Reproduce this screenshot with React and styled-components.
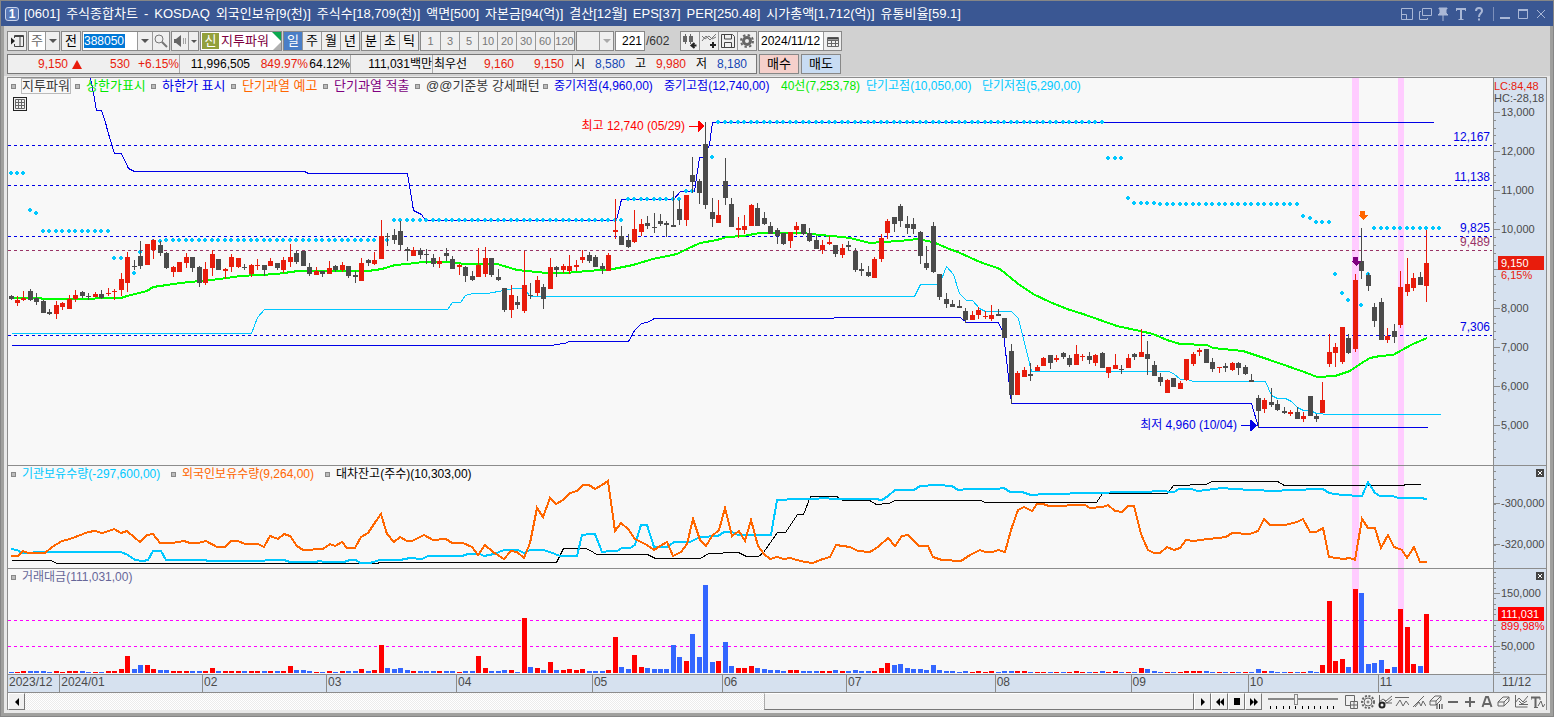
import React from 'react';
import styled, { createGlobalStyle } from 'styled-components';

const GlobalStyle = createGlobalStyle`
  * {
    box-sizing: border-box;
  }

  body {
    margin: 0;
    color: #000;
    font-family: 'Liberation Sans', 'Noto Sans CJK KR', sans-serif;
    font-size: 12px;
    line-height: 14px;
  }

  button,
  input,
  select {
    margin: 0;
    padding: 0;
    border: 0;
    border-radius: 0;
    background: none;
    color: inherit;
    font: inherit;
    appearance: none;
    outline: none;
  }

  svg {
    display: block;
    flex: none;
  }
`;

/* ---------- data ---------- */

// [up, bodyTop, bodyBottom, high, low]
const candles = [
  [0,296,299,295,300],[1,300,303,296,306],[1,298,300,291,301],[0,291,300,289,301],[0,298,302,293,305],
  [0,301,313,300,313],[0,312,314,309,315],[1,305,314,301,319],[1,303,307,302,310],[1,299,309,295,309],
  [1,295,299,290,302],[0,292,296,291,298],[0,296,297,293,300],[1,294,297,292,297],[0,294,298,290,299],
  [1,293,294,288,296],[1,291,292,289,300],[1,279,290,273,296],[1,257,283,252,292],[0,266,267,260,270],
  [0,256,266,241,269],[1,244,265,244,265],[1,240,250,239,259],[0,245,253,241,256],[0,253,268,252,269],
  [1,267,272,266,277],[1,262,272,262,272],[1,257,263,253,268],[0,257,268,257,272],[0,267,283,266,287],
  [1,269,283,262,285],[1,254,268,250,276],[0,259,270,259,270],[1,269,271,268,279],[1,257,267,254,272],
  [1,258,267,258,268],[0,267,268,264,270],[1,265,274,264,277],[1,265,266,259,270],[0,265,270,265,276],
  [1,261,266,258,266],[0,263,268,263,270],[1,260,270,257,273],[1,257,262,244,267],[0,253,262,251,264],
  [0,251,266,251,266],[0,267,274,263,276],[1,271,275,267,275],[0,271,274,271,277],[1,268,274,261,274],
  [0,266,270,265,272],[1,265,270,262,272],[0,266,276,266,278],[0,275,277,271,283],[1,263,281,258,281],
  [0,260,263,259,266],[1,260,264,252,265],[1,236,259,220,259],[0,236,237,233,246],[0,235,240,229,244],
  [0,231,245,221,250],[0,249,251,247,261],[1,250,256,247,256],[0,250,255,248,259],[0,254,255,249,264],
  [0,258,264,254,267],[1,261,264,257,268],[0,253,256,248,261],[0,259,269,256,269],[1,265,267,264,275],
  [0,267,276,266,282],[0,276,280,271,281],[1,265,277,248,277],[1,258,274,247,277],[0,258,275,258,277],
  [0,277,280,269,281],[0,288,310,288,312],[1,295,310,285,318],[0,302,305,296,309],[1,285,311,251,313],
  [0,295,296,283,299],[1,280,293,276,296],[0,287,299,284,309],[1,267,289,258,289],[0,267,270,266,277],
  [1,266,270,264,273],[1,266,271,255,274],[1,265,267,260,271],[1,257,260,250,263],[0,255,261,252,263],
  [0,257,267,255,267],[0,266,269,263,274],[1,255,271,253,271],[1,230,232,199,239],[0,236,245,226,245],
  [0,240,247,234,248],[1,229,242,210,243],[1,224,232,219,236],[0,223,226,216,229],[0,227,228,213,233],
  [0,221,224,214,226],[0,223,225,221,237],[0,225,227,191,227],[0,209,220,200,225],[1,195,220,195,226],
  [0,175,182,157,193],[0,181,193,179,204],[0,144,205,122,209],[0,212,219,198,227],[1,215,223,200,223],
  [0,181,198,158,205],[0,204,227,198,227],[1,228,230,217,238],[1,226,230,215,234],[1,205,226,204,226],
  [0,208,226,203,226],[0,218,224,212,225],[0,226,234,222,234],[0,230,236,228,244],[0,233,244,233,245],
  [1,232,241,232,248],[1,226,230,222,235],[0,224,234,224,235],[0,233,241,228,242],[0,240,249,236,249],
  [1,245,250,240,254],[1,242,244,236,245],[0,245,254,245,257],[1,248,255,244,258],[0,245,247,241,251],
  [0,251,270,248,272],[0,269,271,263,276],[0,272,276,266,277],[1,259,278,257,278],[1,238,259,234,262],
  [1,221,233,219,239],[0,217,224,217,232],[0,206,221,204,227],[0,224,228,216,234],[0,224,229,218,234],
  [0,232,256,231,264],[0,263,268,246,270],[0,226,272,222,273],[0,274,297,274,300],[0,299,304,293,308],
  [0,304,307,300,307],[0,306,308,300,308],[0,311,320,308,323],[1,315,320,311,320],[1,310,315,307,319],
  [1,316,317,311,319],[1,315,319,305,321],[0,314,316,309,316],[0,318,338,318,338],[0,351,395,344,404],
  [1,373,395,371,395],[1,370,377,367,377],[0,374,376,363,381],[1,367,371,365,371],[1,358,366,357,366],
  [0,355,363,355,369],[1,358,360,355,362],[0,353,357,352,359],[0,358,365,355,367],[1,354,365,345,365],
  [1,356,357,354,361],[0,356,360,352,364],[1,355,363,354,366],[0,353,368,352,368],[1,367,373,367,378],
  [1,365,369,354,369],[0,369,370,365,374],[1,358,368,354,368],[0,354,357,353,360],[1,352,357,329,357],
  [0,354,359,341,375],[0,365,376,361,376],[0,377,382,373,386],[1,380,393,379,393],[0,378,387,378,387],
  [1,383,389,381,389],[1,359,380,359,381],[1,354,364,352,366],[1,350,352,348,356],[0,349,363,349,363],
  [0,362,369,358,372],[1,367,368,367,373],[0,366,368,363,372],[1,363,370,362,371],[0,363,368,362,375],
  [0,367,374,365,375],[0,380,382,374,382],[0,398,411,395,428],[1,400,409,398,413],[0,402,405,388,407],
  [0,404,410,400,411],[0,411,413,407,414],[1,412,414,410,416],[0,412,419,407,419],[1,416,419,412,422],
  [0,396,416,396,416],[0,416,419,414,422],[1,400,413,382,413],[1,352,364,334,367],[1,347,353,343,367],
  [1,327,362,327,364],[0,338,353,334,354],[1,280,349,274,352],[0,261,271,228,279],[0,275,286,273,291],
  [0,307,321,303,327],[0,302,340,298,340],[1,336,340,328,343],[0,331,337,324,343],[1,287,325,271,328],
  [1,284,292,258,296],[1,278,288,273,291],[0,277,285,272,285],[1,263,286,230,302],
];

// bar heights, negative on a falling day
const volumes = [
  -1,1,2,-2,-2,-2,-1,2,1,2,2,-2,-1,1,-1,2,2,4,17,-4,-8,8,4,-3,-3,2,2,2,-2,-2,
  2,5,-2,2,2,2,-2,2,2,-2,2,-2,2,7,-3,-3,-2,1,-1,2,-1,2,-2,-2,4,-2,3,28,-5,-4,
  -5,-3,2,-2,-2,-2,2,-2,-2,1,-2,-2,17,5,-2,-2,-3,3,-1,55,-6,5,-3,11,-3,3,4,3,4,-2,
  -2,-2,3,36,-6,-4,18,6,-5,-4,-4,-4,-28,-16,12,-39,-16,-88,-11,12,-31,-7,5,5,7,-5,-4,-3,-3,-2,
  3,3,-2,-2,-2,2,2,-3,2,-2,-3,-2,-2,2,5,10,-8,-9,-5,-4,-4,-3,-8,-3,-2,-2,-1,-2,1,2,
  1,2,-1,-2,-2,2,2,-1,1,1,-1,1,-1,1,2,1,-1,1,-2,1,2,-1,1,-1,5,-4,-2,-1,1,-1,
  1,2,2,2,-2,-1,1,-1,1,-1,1,-1,-4,2,-2,-1,-1,1,-1,1,-2,-1,8,72,12,14,-6,84,-80,-9,
  -10,-13,4,-6,64,46,9,-7,59,
];

// [firstDay, lastDay, y]
const dotRuns = [
  [0,2,173],[3,3,210],[4,4,213],[5,15,231],[16,17,258],[19,19,273],[20,20,252],[22,22,241],
  [23,23,241],[24,58,240],[59,94,220],[95,103,199],[104,105,191],[108,108,157],[109,168,122],
  [169,171,158],[172,172,198],[173,176,203],[177,198,204],[199,199,216],[200,200,218],
  [201,203,222],[204,204,274],[205,205,293],[206,206,300],[208,208,305],[209,209,274],[210,220,228],
];

const MID_HIGH = '90,78 93,93 96,110 101,110 105,122 107,130 114,153 121,153 128,168 134,171 304,171 308,173 407,173 413,210 421,214 425,220 616,220 621,199 673,199 680,191 694,191 699,157 704,157 709,144 712,122 1433,122';
const MID_LOW = '11,345 552,345 555,344 565,343 568,341 628,341 634,330 641,323 647,322 654,318 833,318 834,317 960,317 966,322 998,322 1003,333 1011,403 1251,403 1258,427 1427,427';
const SHORT_LOW = '11,333 251,333 257,317 264,309 447,309 452,302 460,302 465,295 472,293 487,293 503,290 515,288 523,288 530,296 914,296 920,284 939,284 946,266 953,274 959,293 966,300 972,300 979,308 985,311 1011,311 1018,318 1031,371 1168,371 1173,373 1180,379 1187,379 1193,381 1265,381 1271,395 1277,398 1285,398 1291,401 1297,407 1303,410 1310,410 1316,413 1328,414 1440,414';
const MA40 = '11,298 38,298 45,299 90,299 100,298 121,298 127,296 135,294 147,291 153,287 167,285 180,283 200,281 220,279 240,276 277,274 298,271 368,271 382,269 395,265 407,264 423,262 450,262 465,264 497,264 517,270 547,273 565,273 600,270 613,269 633,265 653,259 677,254 687,249 700,243 717,240 727,237 743,236 760,233 803,233 820,235 832,236 850,238 870,243 883,242 900,241 917,239 933,242 947,248 960,253 980,262 1000,269 1017,283 1033,294 1050,302 1067,309 1083,314 1100,320 1117,326 1140,331 1153,334 1167,340 1180,344 1207,345 1213,348 1243,351 1267,359 1290,367 1307,373 1317,377 1335,376 1350,371 1360,364 1370,358 1380,356 1393,355 1402,350 1413,344 1427,338';
const INSTITUTION = '11,549 17,550 22,553 45,552 121,552 128,555 135,560 143,561 148,560 153,551 161,551 166,560 205,560 208,561 264,561 266,560 284,560 290,562 315,562 320,561 324,562 344,562 350,560 356,560 360,563 370,563 380,560 400,560 410,558 422,559 428,556 462,556 468,554 480,554 484,556 494,554 504,550 518,550 524,553 530,550 543,550 550,552 560,556 577,556 582,535 590,534 595,534 602,552 610,551 617,551 622,548 630,548 635,545 641,525 647,525 654,547 667,547 674,542 690,542 700,537 718,536 724,532 732,532 738,535 771,535 777,500 797,499 815,499 823,498 835,499 875,499 882,500 888,496 895,490 914,490 920,486 937,485 952,486 958,490 968,489 996,489 1004,488 1010,492 1022,492 1031,495 1045,494 1065,494 1075,493 1145,492 1160,491 1174,492 1179,489 1192,489 1197,491 1207,490 1213,489 1223,488 1232,489 1275,491 1290,490 1323,489 1329,493 1342,495 1362,496 1368,482 1375,493 1380,496 1393,496 1398,498 1420,498 1427,499';
const FOREIGN = '11,556 18,556 23,551 28,553 45,553 52,547 62,541 70,539 78,536 88,532 95,531 102,533 109,531 114,529 121,533 127,531 135,538 140,542 147,535 153,534 160,543 172,543 184,541 190,543 198,543 206,541 217,547 225,547 231,541 238,541 245,544 258,544 264,547 270,536 278,539 284,534 290,536 297,546 303,550 323,549 330,544 335,546 342,542 347,548 355,548 361,537 368,533 376,521 381,514 387,534 394,542 400,537 407,541 412,541 424,535 433,540 446,539 452,543 463,543 472,547 478,555 485,545 493,552 504,559 511,551 517,552 524,558 530,543 537,508 543,517 550,498 556,504 563,500 570,493 577,491 583,485 589,485 595,489 602,485 608,481 615,531 621,523 628,529 635,539 647,545 654,550 660,546 667,542 673,556 681,552 687,544 693,519 700,540 706,546 712,536 719,530 725,508 732,536 739,531 745,541 751,520 758,546 764,554 770,559 777,557 784,559 790,558 797,560 805,562 813,563 820,560 830,557 836,545 850,547 858,551 870,552 878,547 888,538 895,546 902,536 908,535 919,546 928,546 933,557 942,560 961,561 970,555 980,550 985,552 993,552 998,550 1005,552 1011,530 1018,510 1024,507 1032,511 1037,504 1043,504 1049,506 1085,505 1090,508 1103,507 1108,505 1115,511 1122,512 1128,506 1134,506 1141,534 1148,550 1154,553 1160,553 1167,547 1174,550 1180,548 1186,540 1194,541 1200,540 1226,537 1232,533 1250,534 1258,531 1264,519 1270,525 1285,525 1297,522 1303,519 1310,532 1316,532 1323,528 1329,557 1343,559 1350,558 1355,560 1362,519 1368,528 1375,528 1381,548 1388,535 1394,547 1402,550 1407,558 1414,547 1420,562 1427,562';
const LENDING = '11,560 51,560 56,563 378,563 378,562 556,562 563,548 585,548 590,550 596,554 647,554 655,558 700,558 708,553 738,552 746,556 758,556 763,552 777,532 785,532 797,514 803,514 810,496 836,496 843,500 869,500 876,504 888,503 895,500 980,500 985,502 1096,502 1102,493 1167,493 1173,485 1206,484 1211,481 1277,481 1284,485 1404,485 1404,484 1420,484';

const titleParts = [
  '[0601]', '주식종합차트', '-', 'KOSDAQ', '외국인보유[9(천)]', '주식수[18,709(천)]', '액면[500]',
  '자본금[94(억)]', '결산[12월]', 'EPS[37]', 'PER[250.48]', '시가총액[1,712(억)]', '유통비율[59.1]',
];

const priceLegend = [
  { text: '지투파워', color: '#3a3a3a', w: 64, mark: true, boxed: true },
  { text: '상한가표시', color: '#00e800', w: 76, mark: true },
  { text: '하한가 표시', color: '#0000e6', w: 80, mark: true },
  { text: '단기과열 예고', color: '#ff6600', w: 92, mark: true },
  { text: '단기과열 적출', color: '#800080', w: 92, mark: true },
  { text: '@@기준봉 강세패턴', color: '#3a3a3a', w: 128, mark: true },
  { text: '중기저점(4,960,00)', color: '#0000e6', w: 121, mark: true },
  { text: '중기고점(12,740,00)', color: '#0000e6', w: 117 },
  { text: '40선(7,253,78)', color: '#00e800', w: 85 },
  { text: '단기고점(10,050,00)', color: '#00c8ff', w: 116 },
  { text: '단기저점(5,290,00)', color: '#00c8ff', w: 110 },
];

const holdingLegend = [
  { text: '기관보유수량(-297,600,00)', color: '#00c8ff', w: 160, mark: true },
  { text: '외국인보유수량(9,264,00)', color: '#ff6600', w: 154, mark: true },
  { text: '대차잔고(주수)(10,303,00)', color: '#000', w: 160, mark: true },
];

const valueLegend = [
  { text: '거래대금(111,031,00)', color: '#666699', w: 140, mark: true },
];

const months = [
  ['2023/12', 51], ['2024/01', 143], ['02', 124], ['03', 130], ['04', 136], ['05', 130],
  ['06', 124], ['07', 149], ['08', 136], ['09', 117], ['10', 130], ['11', 115],
];

/* ---------- frame ---------- */

const Frame = styled.div`
  display: flex;
  flex-direction: column;
  min-height: 100vh;
  border: 1px solid #868686;
  background: #a0a09e;
`;

const TitleBar = styled.header`
  display: flex;
  align-items: center;
  height: 25px;
  padding: 0 5px 0 4px;
  background: #3a5793;
  color: #fff;
`;

const WindowNo = styled.span`
  width: 14px;
  height: 14px;
  margin-right: 5px;
  border: 1px solid #c9d3ea;
  border-radius: 3px;
  background: #5878b8;
  font-weight: bold;
  line-height: 12px;
  text-align: center;
`;

const Title = styled.h1`
  display: flex;
  flex: 1;
  gap: 6px;
  margin: 0;
  font-size: 13px;
  font-weight: normal;
  white-space: nowrap;
`;

const WindowButtons = styled.div`
  display: flex;
  align-items: center;
  gap: 4px;
  color: #a9b7d6;

  i {
    width: 1px;
    height: 14px;
    margin-left: 3px;
    background: #7d90bb;
  }

  button {
    display: grid;
    place-items: center;
    width: 14px;
    height: 16px;
  }
`;

const Body = styled.main`
  display: flex;
  flex: 1;
  flex-direction: column;
  margin: 0 3px 3px;
  background: #d1d1d1;
`;

/* ---------- toolbar ---------- */

const ToolRow = styled.div`
  display: flex;
  align-items: center;
  height: 20px;
  margin: 5px 3px 0;
  gap: 1px;
  white-space: nowrap;

  & + & {
    margin-top: 3px;
  }
`;

const Group = styled.div`
  display: flex;
  height: 20px;
  border: 1px solid #888;
  background: #efefef;
  overflow: hidden;

  & > * + * {
    border-left: 1px solid #999;
  }
`;

const ToolButton = styled.button`
  display: grid;
  place-items: center;
  width: ${({ $w }) => $w || 19}px;
  height: 18px;
  background: ${({ $on }) => ($on ? '#4a7ec6' : 'transparent')};
  color: ${({ $on }) => ($on ? '#fff' : '#000')};
  font-size: 13px;
`;

const MinuteButton = styled(ToolButton)`
  color: #777;
  font-size: 11px;
`;

const Field = styled.input`
  width: ${({ $w }) => $w}px;
  height: 18px;
  padding: 0 2px;
  background: #fff;
  text-align: ${({ $align }) => $align || 'left'};
`;

const CodeBox = styled.div`
  display: flex;
  align-items: center;
  width: 54px;
  padding-left: 1px;
  background: #fff;
`;

const CodeField = styled.input`
  width: 41px;
  height: 14px;
  background: #0078d7;
  color: #fff;
`;

const Picker = styled.select`
  width: ${({ $w }) => $w}px;
  height: 18px;
  padding-left: 2px;
  background: ${({ $bg }) => $bg || '#fff'};
  color: #666;
  font-size: 13px;
`;

const StockName = styled.div`
  position: relative;
  display: flex;
  align-items: center;
  width: 80px;
  background: #fff;
  color: #7d0040;
  font-size: 13px;

  b {
    width: 17px;
    height: 16px;
    margin: 0 2px 0 1px;
    background: #93a03b;
    color: #fff;
    font-weight: normal;
    line-height: 16px;
    text-align: center;
  }

  svg {
    position: absolute;
    top: 0;
    right: 0;
  }
`;

const Total = styled.span`
  width: 33px;
  color: #333;
`;

const Quote = styled.div`
  display: flex;
  align-items: center;
  height: 20px;
  border: 1px solid #777;
  background: #efefef;
`;

const Figure = styled.span`
  display: flex;
  align-items: center;
  justify-content: ${({ $left }) => ($left ? 'flex-start' : 'flex-end')};
  width: ${({ $w }) => $w}px;
  height: 18px;
  padding-left: ${({ $left }) => ($left ? 1 : 0)}px;
  border-left: ${({ $line }) => ($line ? '1px solid #aaa' : '0')};
  color: ${({ $color }) => $color || '#000'};
`;

const OrderButton = styled.button`
  width: 40px;
  height: 20px;
  margin-left: 1px;
  border: 1px solid #888;
  background: ${({ $bg }) => $bg};
  font-size: 13px;
`;

/* ---------- charts ---------- */

const ChartArea = styled.section`
  display: grid;
  flex: 1;
  grid-template-rows: minmax(0, 388fr) minmax(0, 103fr) minmax(0, 106fr) 18px 17px;
  margin: 3px;
  border: solid #8c8c8c;
  border-width: 1px 1px 0;
  box-shadow: 0 0 0 3px #e8e8e8;
  clip-path: inset(-1px -3px -3px);
`;

const Pane = styled.div`
  display: grid;
  grid-template-columns: minmax(0, 1fr) 53px;
  min-height: 0;
  border-bottom: 1px solid #8c8c8c;
  overflow: hidden;
`;

const Plot = styled.div`
  position: relative;
  background: #f8f8f8;

  & > svg {
    position: absolute;
    inset: 0;
    width: 100%;
    height: 100%;
  }
`;

const Axis = styled.div`
  position: relative;
  border-left: 1px solid #8c8c8c;
  background: #d6e1ef;
  font-size: 11px;
  overflow: hidden;

  & > svg {
    width: 8px;
    height: 100%;
  }
`;

const AxisLabel = styled.span`
  position: absolute;
  left: ${({ $edge }) => ($edge ? 0 : 7)}px;
  color: ${({ $color }) => $color || '#4a4a4a'};
  white-space: nowrap;
  transform: translateY(-50%);
`;

const AxisTag = styled(AxisLabel)`
  left: 4px;
  width: 46px;
  height: 14px;
  padding-left: 3px;
  background: ${({ $bg }) => $bg};
  color: #fff;
`;

const LevelLabel = styled.span`
  position: absolute;
  right: 3px;
  color: ${({ $color }) => $color};
  transform: translateY(-50%);
`;

const Note = styled.span`
  position: absolute;
  color: ${({ $color }) => $color};
  white-space: nowrap;
  transform: translate(-100%, -50%);
`;

const ClosePane = styled.button`
  position: absolute;
  top: 3px;
  right: 2px;
  display: grid;
  place-items: center;
  width: 8px;
  height: 8px;
  background: #444;
`;

const LegendRow = styled.ul`
  position: relative;
  display: flex;
  margin: 0;
  padding: 1px 3px;
  list-style: none;
`;

const LegendItem = styled.li`
  display: flex;
  flex: none;
  align-items: center;
  gap: 6px;
  width: ${({ $w }) => $w}px;
  color: ${({ $color }) => $color};
  white-space: nowrap;

  i {
    width: 5px;
    height: 5px;
    border: 1px solid #888;
    background: #bbb;
  }
`;

const LegendText = styled.span`
  font-size: ${({ $wide }) => ($wide ? 13 : 12)}px;
  outline: ${({ $boxed }) => ($boxed ? '1px solid #bbb' : 'none')};
`;

const GridButton = styled.button`
  position: relative;
  display: grid;
  place-items: center;
  width: 14px;
  height: 14px;
  margin: 3px 5px;
  border: 1px solid #222;
  background: #f0f0f0;
`;

const TimeRow = styled.div`
  display: grid;
  grid-template-columns: minmax(0, 1fr) 53px;
  border-bottom: 1px solid #8c8c8c;
  background: #d6e1ef;
  color: #4a4a4a;
`;

const Months = styled.div`
  display: flex;
`;

const Month = styled.span`
  flex: ${({ $days }) => $days} 0 0;
  min-width: 0;
  padding-left: 1px;

  & + & {
    border-left: 1px solid #8c8c8c;
  }
`;

const LastDay = styled.span`
  padding-left: 8px;
  border-left: 1px solid #8c8c8c;
`;

/* ---------- bottom bar ---------- */

const BottomBar = styled.div`
  display: flex;
  background: #f0f0f0;
`;

const BarButton = styled.button`
  display: grid;
  place-items: center;
  width: 17px;
  height: 17px;
  border: 1px solid;
  border-color: #fff #777 #777 #fff;
  background: #f0f0f0;
`;

const Track = styled.div`
  display: grid;
  flex: 1;
  grid-template-columns: 740fr 430fr;
  background: repeating-conic-gradient(#fff 0 25%, #ececec 0 50%) 0 0 / 2px 2px;
`;

const Thumb = styled.div`
  grid-column: 2;
  border: 1px solid;
  border-color: #fff #777 #777 #aaa;
  background: #f0f0f0;
`;

const Zoom = styled.label`
  display: flex;
  flex-direction: column;
  width: 70px;
  margin: 0 5px 0 6px;

  input {
    width: 100%;
    height: 12px;
    background: linear-gradient(#888, #888) 0 5px / 100% 2px no-repeat;
  }

  input::-webkit-slider-thumb {
    width: 4px;
    height: 11px;
    border: 1px solid #888;
    background: #f0f0f0;
    appearance: none;
  }
`;

const DrawTools = styled.div`
  display: flex;
  align-items: center;
  gap: 1px;
  color: #666;

  button {
    display: grid;
    place-items: center;
    width: 16px;
    height: 17px;
  }
`;

/* ---------- pieces ---------- */

const BLUE = '#0000e6';
const RED = '#e81c0c';

const dayX = (i) => Math.floor(11 + i * 6.495);

const range = (from, to, step) => {
  const out = [];
  for (let v = from; v < to; v += step) out.push(Math.round(v));
  return out;
};

function Icon({ w = 14, h = 14, sw = 1, children }) {
  return (
    <svg width={w} height={h} viewBox={`0 0 ${w} ${h}`} fill="none" stroke="currentColor" strokeWidth={sw}>
      {children}
    </svg>
  );
}

const Down = ({ color = '#555' }) => (
  <svg width="8" height="4">
    <path d="M0 0h8L4 4z" fill={color} />
  </svg>
);

function Legend({ items }) {
  return (
    <LegendRow>
      {items.map(({ text, color, w, mark, boxed }) => (
        <LegendItem key={text} $w={w} $color={color}>
          {mark && <i />}
          <LegendText $wide={!/\d/.test(text)} $boxed={boxed}>{text}</LegendText>
        </LegendItem>
      ))}
    </LegendRow>
  );
}

function ChartSvg({ top, height, children }) {
  return (
    <svg viewBox={`8 ${top} 1485 ${height}`} preserveAspectRatio="none" shapeRendering="crispEdges">
      <rect x="1352" y={top} width="7" height={height} fill="#ffccff" />
      <rect x="1398" y={top} width="6" height={height} fill="#ffccff" />
      {children}
    </svg>
  );
}

function Line({ points, color, width = 1 }) {
  return (
    <polyline
      points={points}
      fill="none"
      stroke={color}
      strokeWidth={width}
      transform={width === 1 ? 'translate(.5 .5)' : undefined}
    />
  );
}

function Dashed({ y, color }) {
  return <line x1="8" x2="1492" y1={y + 0.5} y2={y + 0.5} stroke={color} strokeDasharray="3 3" />;
}

function Ticks({ top, height, majors, minors }) {
  return (
    <svg viewBox={`0 ${top} 8 ${height}`} preserveAspectRatio="none" shapeRendering="crispEdges" fill="#8c8c8c">
      {minors.map((y) => <rect key={y} y={y} width="2" height="1" />)}
      {majors.map((y) => <rect key={y} y={y} width="6" height="1" />)}
    </svg>
  );
}

function PricePane() {
  const top = 78;
  const height = 387;
  const at = (y) => ({ top: `${((y - top) / height) * 100}%` });
  const noteAt = (x, y) => ({ ...at(y), left: `${((x - 8) / 1485) * 100}%` });
  return (
    <Pane>
      <Plot>
        <ChartSvg top={top} height={height}>
          {[145, 185, 236, 335].map((y) => <Dashed key={y} y={y} color={BLUE} />)}
          <Dashed y={250} color="#993366" />
          <Line points={MID_HIGH} color={BLUE} />
          <Line points={MID_LOW} color={BLUE} />
          <Line points={SHORT_LOW} color="#00c8ff" />
          <Line points={MA40} color="#00ff00" width={2} />
          {dotRuns.map(([from, to, y]) =>
            Array.from({ length: to - from + 1 }, (_, k) => {
              const x = dayX(from + k);
              return <path key={`${x}-${y}`} d={`M${x - 1} ${y - 2}h2v1h1v2h-1v1h-2v-1h-1v-2h1z`} fill="#00c8ff" />;
            })
          )}
          {candles.map(([up, bodyTop, bodyBottom, high, low], i) => (
            <g key={i} fill={up ? RED : '#4b4b4b'}>
              <rect x={dayX(i)} y={high} width="1" height={low - high} />
              <rect x={dayX(i) - 2} y={bodyTop} width="5" height={bodyBottom - bodyTop} />
            </g>
          ))}
          <path d="M1360 211h5v4h3l-5 5-5-5h2z" fill="#ff6600" />
          <path d="M1353 257h5v4h3l-5 5-5-5h2z" fill="#800080" />
          <path d="M689 126h9v-5h1l5 5-5 6h-1v-5h-9z" fill="#f00" />
          <path d="M1241 425h9v-5h1l6 5-6 6h-1v-5h-9z" fill={BLUE} />
        </ChartSvg>
        <Legend items={priceLegend} />
        <GridButton aria-label="표">
          <Icon w={10} h={10}><path d="M.5.5h9v9h-9zM3.5 0v10M6.5 0v10M0 3.5h10M0 6.5h10" stroke="#666" /></Icon>
        </GridButton>
        <Note $color="#f00" style={noteAt(685, 126)}>최고 12,740 (05/29)</Note>
        <Note $color={BLUE} style={noteAt(1237, 425)}>최저 4,960 (10/04)</Note>
        <LevelLabel $color={BLUE} style={at(137)}>12,167</LevelLabel>
        <LevelLabel $color={BLUE} style={at(177)}>11,138</LevelLabel>
        <LevelLabel $color={BLUE} style={at(228)}>9,825</LevelLabel>
        <LevelLabel $color="#993366" style={at(242)}>9,489</LevelLabel>
        <LevelLabel $color={BLUE} style={at(327)}>7,306</LevelLabel>
      </Plot>
      <Axis>
        <Ticks
          top={top}
          height={height}
          majors={[112, 151, 190, 229, 269, 308, 347, 386, 425]}
          minors={range(112, 460, 7.83)}
        />
        <AxisLabel $edge $color={RED} style={at(86)}>LC:84,48</AxisLabel>
        <AxisLabel $edge style={at(98)}>HC:-28,18</AxisLabel>
        {[[13, 112], [12, 151], [11, 190], [10, 229], [8, 308], [7, 347], [6, 386], [5, 425]].map(([k, y]) => (
          <AxisLabel key={k} style={at(y)}>{k},000</AxisLabel>
        ))}
        <AxisTag $bg={RED} style={at(263)}>9,150</AxisTag>
        <AxisLabel $color={RED} style={at(275)}>6,15%</AxisLabel>
      </Axis>
    </Pane>
  );
}

const CloseX = () => (
  <ClosePane aria-label="닫기">
    <Icon w={4} h={4}><path d="M0 0l4 4M4 0L0 4" stroke="#fff" /></Icon>
  </ClosePane>
);

function HoldingPane() {
  const top = 466;
  const height = 102;
  const at = (y) => ({ top: `${((y - top) / height) * 100}%` });
  return (
    <Pane>
      <Plot>
        <ChartSvg top={top} height={height}>
          <Line points={LENDING} color="#000" />
          <Line points={INSTITUTION} color="#00c8ff" width={2} />
          <Line points={FOREIGN} color="#ff6600" width={2} />
        </ChartSvg>
        <Legend items={holdingLegend} />
      </Plot>
      <Axis>
        <Ticks top={top} height={height} majors={[503, 544]} minors={range(471, 566, 8.2)} />
        <AxisLabel style={at(503)}>-300,000</AxisLabel>
        <AxisLabel style={at(544)}>-320,000</AxisLabel>
        <CloseX />
      </Axis>
    </Pane>
  );
}

function ValuePane() {
  const top = 569;
  const height = 105;
  const at = (y) => ({ top: `${((y - top) / height) * 100}%` });
  return (
    <Pane>
      <Plot>
        <ChartSvg top={top} height={height}>
          <Dashed y={620} color="#f0f" />
          <Dashed y={646} color="#f0f" />
          {volumes.map((v, i) => (
            <rect
              key={i}
              x={dayX(i) - 2}
              y={673 - Math.abs(v)}
              width="5"
              height={Math.abs(v)}
              fill={v > 0 ? '#f00' : '#3366ff'}
            />
          ))}
        </ChartSvg>
        <Legend items={valueLegend} />
      </Plot>
      <Axis>
        <Ticks top={top} height={height} majors={[593, 620, 646, 672]} minors={range(572, 672, 5.3)} />
        <AxisLabel style={at(593)}>150,000</AxisLabel>
        <AxisLabel style={at(646)}>50,000</AxisLabel>
        <AxisLabel $color="#f00" style={at(626)}>899,98%</AxisLabel>
        <AxisTag $bg="#f00" style={at(614)}>111,031</AxisTag>
        <CloseX />
      </Axis>
    </Pane>
  );
}

function Toolbar() {
  return (
    <ToolRow>
      <Group>
        <ToolButton $w={18} aria-label="창 고정">
          <Icon><path d="M4.5 4V1.500h9v11h-9V10M4 2.500h9" stroke="#444" /><path d="M10 1.500v11" stroke="#444" /><path d="M1 3.500l4 3.500-4 3.500z" fill="#222" stroke="none" /></Icon>
        </ToolButton>
      </Group>
      <Group>
        <Picker $w={16} aria-label="종목 구분"><option>주</option></Picker>
        <ToolButton $w={14} aria-label="열기"><Down /></ToolButton>
      </Group>
      <Group><ToolButton $w={18}>전</ToolButton></Group>
      <Group>
        <CodeBox><CodeField aria-label="종목코드" defaultValue="388050" /></CodeBox>
        <ToolButton $w={15} aria-label="최근 종목"><Down /></ToolButton>
        <ToolButton $w={17} aria-label="검색">
          <Icon><circle cx="5" cy="5" r="4" stroke="#777" /><path d="M8 8l5 5" stroke="#777" strokeWidth="2" /></Icon>
        </ToolButton>
      </Group>
      <Group>
        <ToolButton $w={16} aria-label="음성">
          <Icon><path d="M1 5h2l5-4v12L3 9H1z" fill="#666" stroke="none" /><path d="M10 5h1M12 5h1M10 7h1M12 7h1M10 9h1M12 9h1" stroke="#555" /></Icon>
        </ToolButton>
        <ToolButton $w={10} aria-label="음성 설정"><svg width="6" height="3"><path d="M0 0h6L3 3z" fill="#555" /></svg></ToolButton>
      </Group>
      <Group>
        <StockName>
          <b>신</b>지투파워
          <svg width="9" height="18"><path d="M0 0h9v9z" fill="#0aa84f" /><path d="M9 10v8H1z" fill="#b0b0b0" /></svg>
        </StockName>
      </Group>
      <Group>
        {['일', '주', '월', '년'].map((t, i) => <ToolButton key={t} $w={i ? 19 : 18} $on={t === '일'}>{t}</ToolButton>)}
      </Group>
      <Group>
        {['분', '초', '틱'].map((t, i) => <ToolButton key={t} $w={i ? 19 : 18}>{t}</ToolButton>)}
      </Group>
      <Group>
        {[1, 3, 5, 10, 20, 30, 60].map((n) => <MinuteButton key={n}>{n}</MinuteButton>)}
        <MinuteButton $w={20}>120</MinuteButton>
      </Group>
      <Group>
        <Picker $w={22} $bg="#efefef" aria-label="주기" />
        <ToolButton $w={14} aria-label="주기 열기"><Down color="#aaa" /></ToolButton>
      </Group>
      <Group><Field $w={28} $align="right" aria-label="표시 개수" defaultValue="221" /></Group>
      <Total>/602</Total>
      <Group>
        <ToolButton $w={18} aria-label="차트 유형 추가">
          <Icon w={16} h={16}><path d="M1 3h4v6H1zM7 3h4v6H7z" fill="#666" stroke="none" /><path d="M3.500 1v10M8.500 1v10" stroke="#666" /><path d="M9.500 12.500h5M12.500 10l-3 2.500 3 2.500" stroke="#222" strokeWidth="2" /></Icon>
        </ToolButton>
        <ToolButton aria-label="지표 추가">
          <Icon w={16} h={16}><path d="M1 8l4-5 4 4 6-6M1 3l3 3 4-3 3 3 4-2" stroke="#777" /><path d="M9 12h6M12 9v6" stroke="#222" strokeWidth="2" /></Icon>
        </ToolButton>
        <ToolButton aria-label="저장">
          <Icon w={16} h={16}><path d="M1.500 1.500h11l2 2v11h-13zM4.500 2v4h7V2M4.500 14V9.500h7V14" stroke="#444" /></Icon>
        </ToolButton>
        <ToolButton aria-label="설정">
          <Icon><circle cx="7" cy="7" r="3.500" stroke="#666" strokeWidth="3" /><circle cx="7" cy="7" r="6" stroke="#666" strokeWidth="2" strokeDasharray="2.400 2.300" /></Icon>
        </ToolButton>
      </Group>
      <Group>
        <Field $w={64} aria-label="날짜" defaultValue="2024/11/12" />
        <ToolButton $w={18} aria-label="달력">
          <Icon w={12} h={11}><path d="M.5 1.500h11v9H.5zM0 4.500h12M4.500 4v7M8.500 4v7M1 7.500h10" stroke="#666" /><path d="M1 2.500h10" stroke="#444" strokeWidth="2" /></Icon>
        </ToolButton>
      </Group>
    </ToolRow>
  );
}

function QuoteRow() {
  const blue = '#1446b4';
  return (
    <ToolRow>
      <Quote>
        <Figure $w={60} $color={RED}>9,150</Figure>
        <Figure $w={14}><svg width="10" height="9"><path d="M0 9h10L5 0z" fill={RED} /></svg></Figure>
        <Figure $w={48} $color={RED}>530</Figure>
        <Figure $w={49} $color={RED}>+6.15%</Figure>
        <Figure $w={71} $line>11,996,505</Figure>
        <Figure $w={58} $color={RED}>849.97%</Figure>
        <Figure $w={42}>64.12%</Figure>
        <Figure $w={82} $line>111,031백만</Figure>
        <Figure $w={38} $line $left>최우선</Figure>
        <Figure $w={44} $color={RED}>9,160</Figure>
        <Figure $w={50} $color={RED}>9,150</Figure>
        <Figure $w={8} />
        <Figure $w={14} $line $left>시</Figure>
        <Figure $w={39} $color={blue}>8,580</Figure>
        <Figure $w={21}>고</Figure>
        <Figure $w={40} $color={RED}>9,980</Figure>
        <Figure $w={21}>저</Figure>
        <Figure $w={40} $color={blue}>8,180</Figure>
        <Figure $w={9} />
      </Quote>
      <OrderButton $bg="#f5d0cb">매수</OrderButton>
      <OrderButton $bg="#c8dcf3">매도</OrderButton>
    </ToolRow>
  );
}

function ScrollRow() {
  return (
    <BottomBar>
      <BarButton aria-label="이전"><svg width="4" height="8"><path d="M4 0v8L0 4z" /></svg></BarButton>
      <Track><Thumb /></Track>
      <BarButton aria-label="다음"><svg width="4" height="8"><path d="M0 0v8l4-4z" /></svg></BarButton>
      <BarButton aria-label="뒤로"><svg width="8" height="8"><path d="M4 0v8L0 4zM8 0v8L4 4z" /></svg></BarButton>
      <BarButton aria-label="정지"><svg width="6" height="7"><path d="M0 0h6v7H0z" /></svg></BarButton>
      <BarButton aria-label="빨리"><svg width="8" height="8"><path d="M0 0v8l4-4zM4 0v8l4-4z" /></svg></BarButton>
      <Zoom>
        <input type="range" min="0" max="100" defaultValue="39" aria-label="확대" />
        <svg width="70" height="4" shapeRendering="crispEdges">
          {range(2, 70, 6.3).map((x) => <rect key={x} x={x} y="1" width="1" height="3" />)}
        </svg>
      </Zoom>
      <DrawTools>
        <button aria-label="새 창"><Icon><path d="M1.500.5h9v10h-9z" /><path d="M6.500 6.500h7v7h-7zM10 7v6M7 10h6" fill="#f0f0f0" /></Icon></button>
        <button aria-label="설정"><Icon><circle cx="7" cy="7" r="6" strokeWidth="2" strokeDasharray="2 1.500" /><circle cx="7" cy="7" r="4" /><circle cx="7" cy="7" r="1" /></Icon></button>
        <button aria-label="지표 설정"><Icon><path d="M1.500 0v8M1 7l4-3 3 2 6-5M6 8h8M6 5l3 3 5-4" /><circle cx="4" cy="10" r="2.500" stroke="#222" strokeWidth="2" /></Icon></button>
        <button aria-label="수평선"><Icon><path d="M0 2.500h14M1 11l4-6 3 6 3-5 3 4" /></Icon></button>
        <button aria-label="추세선"><Icon><path d="M1 12L12 1M3 12l4-5 2 4 2-5 3 5" /></Icon></button>
        <button aria-label="모두 지우기"><Icon><path d="M1 6l5-5h6l-5 5zM1 6v4h6V6M7 10l5-5V1" /><path d="M8 9v5M10.500 9v5M13 9v5" stroke="#333" /></Icon></button>
        <button aria-label="축소"><Icon sw={2}><path d="M2 7h10" /></Icon></button>
        <button aria-label="확대"><Icon sw={2}><path d="M2 7h10M7 2v10" /></Icon></button>
        <button aria-label="글자"><Icon sw={2}><path d="M2.500 12L6 2h2l3.500 10M4 9h6" /></Icon></button>
        <button aria-label="지우개"><Icon><path d="M1 7l5-5h6l-5 5zM1 7v4h6V7M7 11l5-5V2" /></Icon></button>
        <button aria-label="지표"><Icon><path d="M1.500 0v12h12M1 8l4-5 4 4 5-6M5 9.500h9M5 6l3 3 5-3" /></Icon></button>
        <button aria-label="추세 글자"><Icon><path d="M0 2.500h9M4.500 2v11" strokeWidth="2" /><path d="M0 2v3M9 2v3M3 12.500h4M7 11l3-5 2 6 2-3" /></Icon></button>
      </DrawTools>
    </BottomBar>
  );
}

function App() {
  return (
    <>
      <GlobalStyle />
      <Frame>
        <TitleBar>
          <WindowNo>1</WindowNo>
          <Title>{titleParts.map((t) => <span key={t}>{t}</span>)}</Title>
          <WindowButtons>
            <button aria-label="분할"><Icon><path d="M1.500 1.500h11v11h-11zM2 7.500h4.500V12" /></Icon></button>
            <button aria-label="복제"><Icon><path d="M4.500 1.500h9v7h-9zM3 4.500H1.500v8h8V11" /></Icon></button>
            <button aria-label="고정"><Icon><path d="M3 1h8v1h-1v4l2 2H2l2-2V2H3z" fill="currentColor" /><path d="M7 8v6" /></Icon></button>
            <button aria-label="글꼴"><Icon><path d="M2.500 4V2h9v2M4.500 12.500h5" /><path d="M2 2h10M7 2v10" strokeWidth="2" /></Icon></button>
            <button aria-label="도움말"><Icon sw={2}><path d="M4 4q0-3 3-3t3 3q0 1-1.500 2.500T7 10M7 11.500v2" /></Icon></button>
            <i />
            <button aria-label="최소화"><Icon sw={2}><path d="M2 11h10" /></Icon></button>
            <button aria-label="최대화"><Icon><path d="M2.500 3.500h9v8h-9z" /><path d="M2 3h10" strokeWidth="2" /></Icon></button>
            <button aria-label="닫기"><Icon><path d="M3 3l8 8M11 3l-8 8" /></Icon></button>
          </WindowButtons>
        </TitleBar>
        <Body>
          <Toolbar />
          <QuoteRow />
          <ChartArea>
            <PricePane />
            <HoldingPane />
            <ValuePane />
            <TimeRow>
              <Months>
                {months.map(([label, days]) => <Month key={label} $days={days}>{label}</Month>)}
              </Months>
              <LastDay>11/12</LastDay>
            </TimeRow>
            <ScrollRow />
          </ChartArea>
        </Body>
      </Frame>
    </>
  );
}

export default App;
